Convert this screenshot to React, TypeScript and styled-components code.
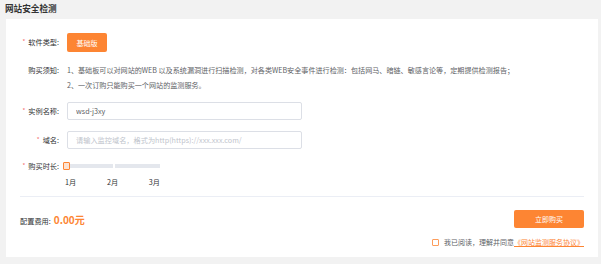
import * as React from 'react';
import styled, { createGlobalStyle } from 'styled-components';

const ORANGE = '#fd8533';

const GlobalStyle = createGlobalStyle`
  html, body {
    margin: 0;
    padding: 0;
    background: #f2f2f2;
  }
  body {
    font-family: "Noto Sans CJK SC", "Noto Sans", sans-serif;
    color: #606266;
  }
`;

const Page = styled.div({
  width: '601px',
  height: '264px',
  background: '#f2f2f2',
  display: 'flex',
  flexDirection: 'column',
  boxSizing: 'border-box',
});

const PageTitle = styled.div({
  height: '19px',
  lineHeight: '17px',
  paddingLeft: '5px',
  fontSize: '8.6px',
  fontWeight: 700,
  color: '#333',
});

const Card = styled.div({
  marginLeft: '6px',
  width: '592px',
  height: '238px',
  background: '#fff',
  display: 'flex',
  flexDirection: 'column',
  paddingTop: '14px',
  boxSizing: 'border-box',
});

const Row = styled.div<{ $mt?: number; $align?: string }>`
  display: flex;
  align-items: ${(p) => p.$align ?? 'center'};
  gap: 8px;
  margin-top: ${(p) => p.$mt ?? 0}px;
`;

const Label = styled.div<{ $required?: boolean }>`
  width: 53px;
  flex-shrink: 0;
  text-align: right;
  font-size: 7.2px;
  color: #303133;
  white-space: nowrap;
  line-height: 15px;
  &::before {
    content: ${(p) => (p.$required ? "'*'" : "''")};
    color: #f56c6c;
    font-size: 6px;
    margin-right: 3px;
    position: relative;
    top: -1px;
  }
`;

const TypeButton = styled.button({
  width: '40px',
  height: '19px',
  padding: 0,
  border: 'none',
  borderRadius: '2px',
  background: ORANGE,
  color: '#fff',
  fontFamily: 'inherit',
  fontSize: '7px',
  cursor: 'pointer',
});

const Notice = styled.div({
  fontSize: '7.1px',
  lineHeight: '15px',
  color: '#606266',
});

const Input = styled.input({
  width: '235px',
  height: '18px',
  boxSizing: 'border-box',
  border: '1px solid #dcdfe6',
  borderRadius: '2px',
  padding: '0 8px',
  fontFamily: 'inherit',
  fontSize: '7.2px',
  color: '#606266',
  outline: 'none',
  '&::placeholder': { color: '#c0c4cc' },
});

const Slider = styled.div({
  width: '97px',
  display: 'flex',
  flexDirection: 'column',
  marginLeft: '-4px',
});

const SliderBar = styled.div({
  display: 'flex',
  alignItems: 'center',
  height: '9px',
});

const Handle = styled.div({
  width: '7px',
  height: '8px',
  boxSizing: 'border-box',
  border: `1.5px solid ${ORANGE}`,
  borderRadius: '1px',
  background: '#fde3d2',
  flexShrink: 0,
});

const Track = styled.div({
  flex: 1,
  height: '4px',
  background:
    'linear-gradient(to right, #e4e7ed 0 48%, #fff 48% 49.5%, #e4e7ed 49.5% 100%)',
});

const Marks = styled.div({
  display: 'flex',
  justifyContent: 'space-between',
  paddingLeft: '2px',
  marginTop: '7px',
  fontSize: '7.2px',
  color: '#303133',
  lineHeight: '10px',
});

const Divider = styled.div({
  margin: '9px 14px 0',
  height: '1px',
  background: '#ebeef5',
});

const Footer = styled.div({
  padding: '0 14px',
  display: 'flex',
  flexDirection: 'column',
});

const CostRow = styled.div({
  display: 'flex',
  justifyContent: 'space-between',
  alignItems: 'center',
  marginTop: '13px',
});

const Cost = styled.div({
  display: 'flex',
  alignItems: 'baseline',
  fontSize: '7.2px',
  color: '#303133',
  gap: '3px',
});

const Price = styled.span({
  color: ORANGE,
  fontSize: '10px',
  fontWeight: 700,
});

const BuyButton = styled.button({
  width: '70px',
  height: '18px',
  padding: 0,
  border: 'none',
  borderRadius: '2px',
  background: ORANGE,
  color: '#fff',
  fontFamily: 'inherit',
  fontSize: '7px',
  cursor: 'pointer',
});

const Agree = styled.label({
  display: 'flex',
  alignItems: 'center',
  alignSelf: 'flex-end',
  marginTop: '9px',
  fontSize: '7px',
  color: '#606266',
  lineHeight: '10px',
});

const Check = styled.span({
  width: '7px',
  height: '7px',
  boxSizing: 'border-box',
  border: `1px solid ${ORANGE}`,
  borderRadius: '1px',
  marginRight: '5px',
  opacity: 0.8,
});

const Link = styled.a({
  color: ORANGE,
  textDecoration: 'underline',
  textUnderlineOffset: '1px',
});

export default function App() {
  const [domain, setDomain] = React.useState('');
  return (
    <Page>
      <GlobalStyle />
      <PageTitle>网站安全检测</PageTitle>
      <Card>
        <Row>
          <Label $required>软件类型:</Label>
          <TypeButton>基础版</TypeButton>
        </Row>
        <Row $mt={11} $align="flex-start">
          <Label>购买须知:</Label>
          <Notice>
            1、基础板可以对网站的WEB 以及系统漏洞进行扫描检测，对各类WEB安全事件进行检测：包括网马、暗链、敏感言论等，定期提供检测报告；
            <br />
            2、一次订购只能购买一个网站的监测服务。
          </Notice>
        </Row>
        <Row $mt={9}>
          <Label $required>实例名称:</Label>
          <Input defaultValue="wsd-j3xy" />
        </Row>
        <Row $mt={11}>
          <Label $required>域名:</Label>
          <Input
            value={domain}
            onChange={(e) => setDomain(e.target.value)}
            placeholder="请输入监控域名，格式为http(https)://xxx.xxx.com/"
          />
        </Row>
        <Row $mt={12} $align="flex-start">
          <Label $required style={{ lineHeight: '10px' }}>
            购买时长:
          </Label>
          <Slider>
            <SliderBar>
              <Handle />
              <Track />
            </SliderBar>
            <Marks>
              <span>1月</span>
              <span>2月</span>
              <span>3月</span>
            </Marks>
          </Slider>
        </Row>
        <Divider />
        <Footer>
          <CostRow>
            <Cost>
              配置费用:<Price>0.00元</Price>
            </Cost>
            <BuyButton>立即购买</BuyButton>
          </CostRow>
          <Agree>
            <Check />
            我已阅读，理解并同意<Link>《网站监测服务协议》</Link>
          </Agree>
        </Footer>
      </Card>
    </Page>
  );
}
